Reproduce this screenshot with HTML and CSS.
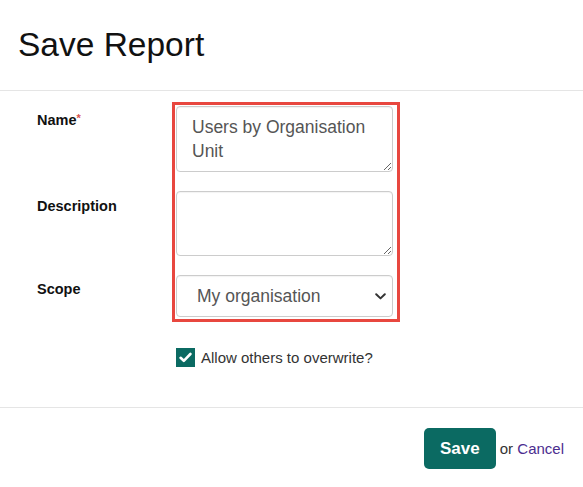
FILE: index.html
```html
<!DOCTYPE html>
<html lang="en">
<head>
    <meta charset="UTF-8">
    <meta name="viewport" content="width=device-width, initial-scale=1.0">
    <title>Save Report</title>
    <link rel="stylesheet" href="styles.css">
</head>
<body>
    <div class="modal">
        <div class="modal-header">
            <h2>Save Report</h2>
        </div>
        <div class="modal-body">
            <div class="form-grid">
                <div class="labels">
                    <label class="label label-name" for="reportName">Name<span class="required">*</span></label>
                    <label class="label label-desc" for="reportDesc">Description</label>
                    <label class="label label-scope" for="reportScope">Scope</label>
                </div>
                <div class="fields">
                    <textarea id="reportName" class="field field-name">Users by Organisation Unit</textarea>
                    <textarea id="reportDesc" class="field field-desc"></textarea>
                    <div class="select-wrap">
                        <select id="reportScope" class="field field-select">
                            <option>My organisation</option>
                            <option>Only me</option>
                            <option>Everyone</option>
                        </select>
                        <svg class="chevron" width="11" height="7" viewBox="0 0 11 7">
                            <path d="M1.2 1.2 L5.5 5.4 L9.8 1.2" fill="none" stroke="#333" stroke-width="2" stroke-linecap="round" stroke-linejoin="round"/>
                        </svg>
                    </div>
                </div>
            </div>
            <label class="check-row">
                <span class="checkbox">
                    <svg width="13" height="11" viewBox="0 0 13 11">
                        <path d="M1.6 5.8 L4.8 8.8 L11.4 2" fill="none" stroke="#fff" stroke-width="2.6" stroke-linecap="round" stroke-linejoin="round"/>
                    </svg>
                </span>
                Allow others to overwrite?
            </label>
        </div>
        <div class="modal-footer">
            <button class="btn-save">Save</button>
            <span class="or">or <a href="#" class="cancel">Cancel</a></span>
        </div>
    </div>
</body>
</html>
```

FILE: styles.css
```css
body {
    margin: 0;
    font-family: "Liberation Sans", Arial, sans-serif;
    background-color: #fff;
    color: #333;
}
.modal {
    width: 583px;
    height: 487px;
    background-color: #fff;
}
.modal-header {
    height: 90px;
    display: flex;
    align-items: center;
    padding-left: 18px;
    border-bottom: 1px solid #e5e5e5;
}
.modal-header h2 {
    margin: 0;
    font-size: 33.5px;
    font-weight: normal;
    line-height: 1;
    color: #111;
}
.modal-body {
    height: 305px;
    padding-top: 11px;
}
.form-grid {
    display: flex;
}
.labels {
    width: 135px;
    padding-left: 37px;
    padding-top: 4px;
    display: flex;
    flex-direction: column;
}
.label {
    font-size: 14.5px;
    font-weight: bold;
    line-height: 20px;
    color: #111;
}
.label-name {
    margin-top: 4px;
    height: 86px;
}
.label-desc {
    height: 83px;
}
.required {
    color: #d9534f;
    font-size: 11px;
    vertical-align: top;
    position: relative;
    top: -2px;
}
.fields {
    width: 217px;
    border: 3px solid #e8473f;
    padding: 1px 4px 2px 1px;
    display: flex;
    flex-direction: column;
    gap: 19px;
}
.field {
    box-sizing: border-box;
    width: 217px;
    border: 1px solid #ccc;
    border-radius: 4px;
    font-family: "Liberation Sans", Arial, sans-serif;
    font-size: 17.5px;
    color: #555;
    background-color: #fff;
    box-shadow: inset 0 1px 1px rgba(0, 0, 0, 0.05);
    margin: 0;
}
.field-name, .field-desc {
    height: 66px;
    padding: 8px 15px;
    line-height: 24px;
    resize: vertical;
    overflow: hidden;
}
.field-desc {
    height: 65px;
}
.select-wrap {
    position: relative;
}
.field-select {
    height: 42px;
    padding: 0 30px 0 20px;
    appearance: none;
    -webkit-appearance: none;
}
.chevron {
    position: absolute;
    right: 7px;
    top: 18px;
    pointer-events: none;
}
.check-row {
    margin-top: 26px;
    margin-left: 176px;
    display: flex;
    align-items: center;
    gap: 6px;
    font-size: 15px;
    color: #333;
}
.checkbox {
    width: 19px;
    height: 19px;
    background-color: #0b6a62;
    display: flex;
    align-items: center;
    justify-content: center;
}
.modal-footer {
    border-top: 1px solid #e5e5e5;
    display: flex;
    justify-content: flex-end;
    align-items: center;
    padding: 20px 19px 0 0;
    gap: 4px;
}
.btn-save {
    width: 72px;
    height: 41px;
    background-color: #0b6a62;
    color: #fff;
    border: none;
    border-radius: 5px;
    font-family: "Liberation Sans", Arial, sans-serif;
    font-size: 17px;
    font-weight: bold;
}
.or {
    font-size: 15px;
    color: #333;
}
.cancel {
    color: #4b2d8f;
    text-decoration: none;
}
```
